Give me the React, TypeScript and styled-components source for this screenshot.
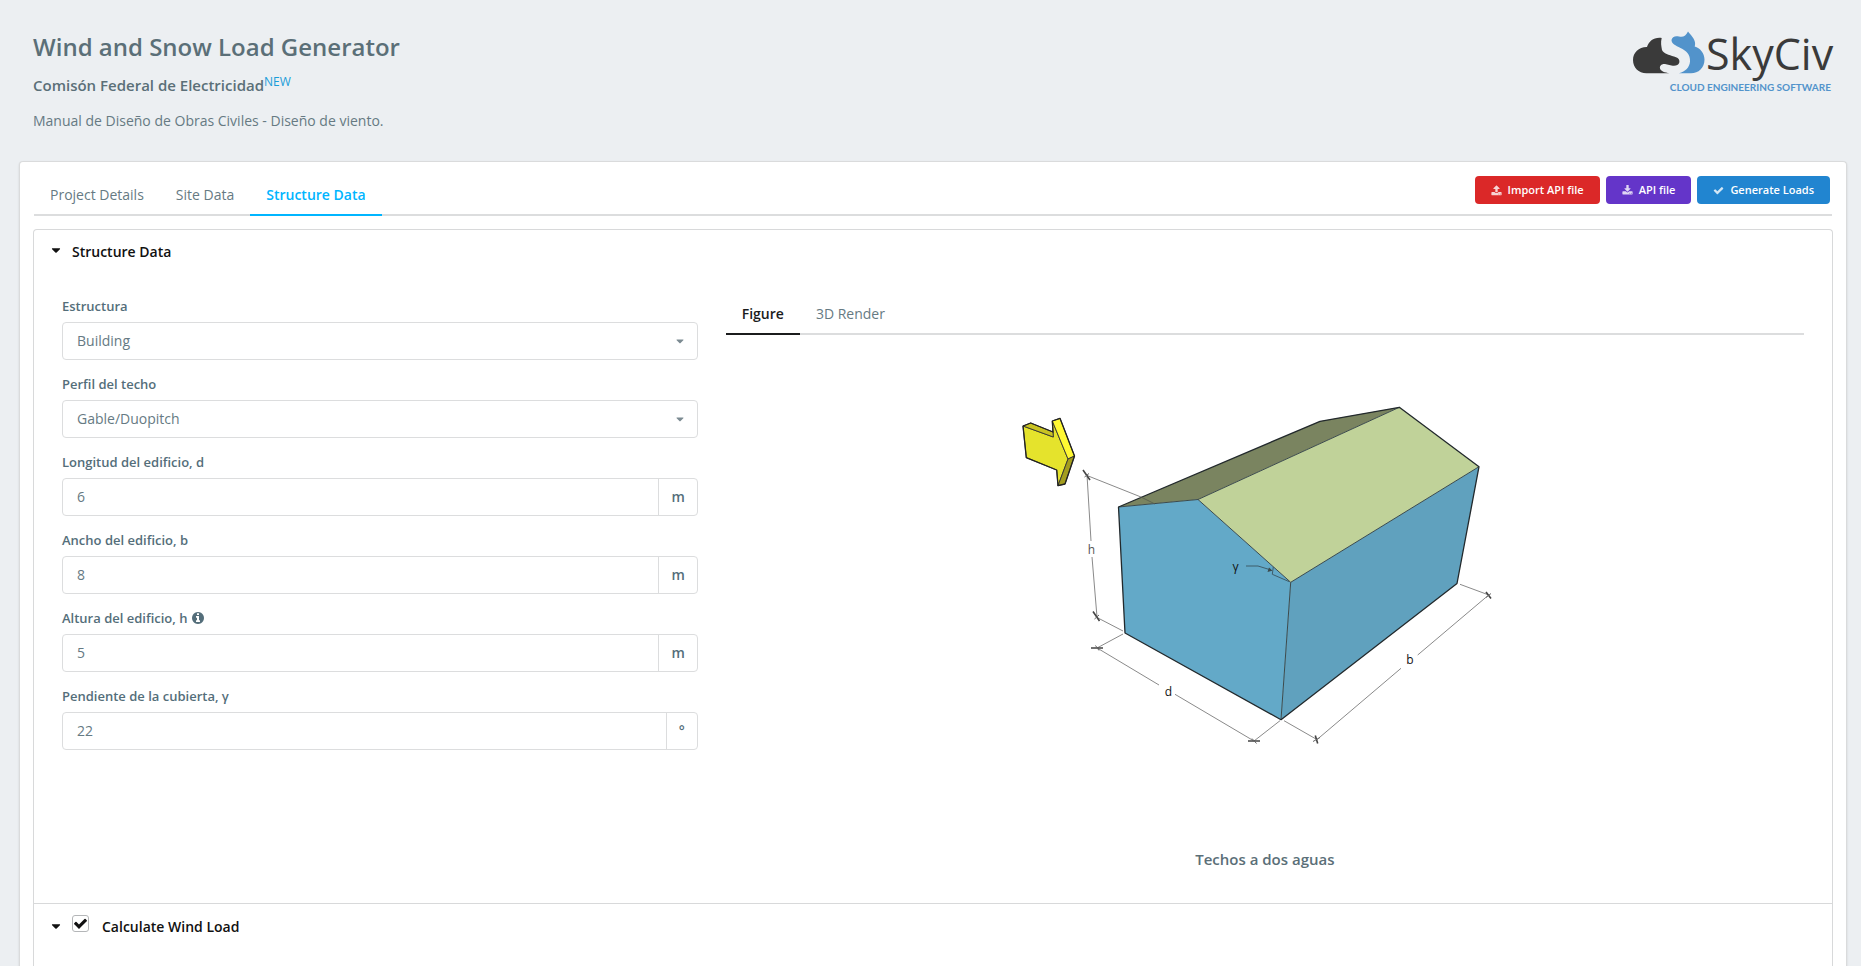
import React, { useState } from "react";
import styled, { createGlobalStyle } from "styled-components";
import { FaCaretDown } from "react-icons/fa";

const GlobalStyle = createGlobalStyle`
  *, *::before, *::after { box-sizing: border-box; }
  html, body { margin: 0; background: #eceff2; }
  body, button, input, select {
    font-family: "Open Sans", sans-serif;
    font-size: 14px;
    line-height: 20px;
    color: #546e7a;
  }
  h1, h2, p, figure { margin: 0; padding: 0; }
`;

const Page = styled.div`
  min-height: 100vh;
  overflow: hidden;
  display: flex;
  flex-direction: column;
`;

const Header = styled.header`
  display: flex;
  justify-content: space-between;
  align-items: flex-start;
  padding: 30px 24px 30px 33px;
`;

const HeaderText = styled.div`
  display: flex;
  flex-direction: column;
`;

const Title = styled.h1`
  font-size: 24px;
  line-height: 34px;
  font-weight: 600;
  color: #5b6f78;
`;

const Subtitle = styled.h2`
  display: flex;
  margin-top: 11px;
  font-size: 15px;
  line-height: 20px;
  font-weight: 600;
  color: #5b6f78;
`;

const NewTag = styled.span`
  margin-top: -3px;
  font-size: 12px;
  font-weight: 400;
  color: #1b9dd9;
`;

const Description = styled.p`
  margin-top: 16px;
  color: #667a83;
`;

const LogoSvg = styled.svg`
  display: block;
  flex: none;
`;

const Card = styled.main`
  flex: 1;
  margin: 0 14px 0 19px;
  padding: 14px 13px 0;
  background: #fff;
  border: 1px solid #dadbdc;
  border-bottom: 0;
  border-radius: 4px 4px 0 0;
  box-shadow: 0 1px 2px rgba(34, 36, 38, 0.15);
`;

const TopBar = styled.div`
  display: flex;
  justify-content: space-between;
  align-items: flex-start;
  margin: 0 1px;
  border-bottom: 2px solid #dcddde;
`;

const TabList = styled.div<{ $ruled?: boolean }>`
  display: flex;
  border-bottom: ${(p) => (p.$ruled ? "2px solid #dcddde" : "0")};
`;

const Tab = styled.button<{ $active: boolean; $accent: string }>`
  margin-bottom: -2px;
  padding: 9px 16px;
  border: 0;
  border-bottom: 2px solid ${(p) => (p.$active ? p.$accent : "transparent")};
  background: none;
  color: ${(p) => (p.$active ? p.$accent : "#667a83")};
  font-weight: ${(p) => (p.$active ? 600 : 400)};
  cursor: pointer;
`;

const Actions = styled.div`
  display: flex;
  gap: 6px;
  padding-right: 2px;
`;

const ActionButton = styled.button<{ $color: string }>`
  display: flex;
  align-items: center;
  gap: 6px;
  height: 28px;
  padding: 0 16px;
  border: 0;
  border-radius: 4px;
  background: ${(p) => p.$color};
  color: #fff;
  font-size: 11px;
  font-weight: 600;
  cursor: pointer;
  svg { opacity: 0.8; }
`;

const Accordion = styled.div`
  margin-top: 13px;
  min-height: 740px;
  border: 1px solid #d8d9da;
  border-radius: 4px 4px 0 0;
  border-bottom: 0;
`;

const Section = styled.section`
  & + & { border-top: 1px solid #d8d9da; }
`;

const SectionHeader = styled.div<{ $tall?: boolean }>`
  display: flex;
  align-items: center;
  gap: 9px;
  height: ${(p) => (p.$tall ? 46 : 43)}px;
  padding: 0 15px;
  color: #111;
  font-weight: 600;
`;

const SectionToggle = styled.button`
  display: flex;
  align-items: center;
  gap: 9px;
  padding: 0;
  border: 0;
  background: none;
  color: #111;
  font-weight: 600;
  cursor: pointer;
  svg { margin-bottom: 3px; }
`;

const CheckLabel = styled.label`
  display: flex;
  align-items: center;
  gap: 13px;
  cursor: pointer;
`;

const CheckWrap = styled.span`
  display: grid;
  width: 17px;
  height: 17px;
  place-items: center;
  margin-bottom: 7px;
  svg { grid-area: 1 / 1; pointer-events: none; }
`;

const CheckInput = styled.input`
  grid-area: 1 / 1;
  appearance: none;
  width: 17px;
  height: 17px;
  margin: 0;
  border: 1px solid #b4b6b8;
  border-radius: 3px;
  background: #fff;
`;

const Columns = styled.div`
  display: grid;
  grid-template-columns: minmax(0, 6fr) minmax(0, 10fr);
  padding: 22px 14px 34px;
`;

const Form = styled.form`
  display: flex;
  flex-direction: column;
  gap: 14px;
  padding: 1px 14px 0;
`;

const Field = styled.div`
  display: flex;
  flex-direction: column;
  gap: 6px;
`;

const Label = styled.label`
  display: flex;
  align-items: center;
  gap: 4px;
  font-size: 13px;
  font-weight: 600;
`;

const SelectWrap = styled.div`
  display: grid;
  align-items: center;
  svg {
    grid-area: 1 / 1;
    justify-self: end;
    margin-right: 12px;
    pointer-events: none;
    color: #7c8b92;
  }
`;

const Select = styled.select`
  grid-area: 1 / 1;
  appearance: none;
  width: 100%;
  height: 38px;
  padding: 0 14px;
  border: 1px solid #dcddde;
  border-radius: 4px;
  background: #fff;
  color: #667a83;
`;

const InputGroup = styled.div`
  display: flex;
  height: 38px;
  border: 1px solid #dcddde;
  border-radius: 4px;
`;

const Input = styled.input`
  flex: 1;
  min-width: 0;
  padding: 0 14px;
  border: 0;
  border-radius: 4px 0 0 4px;
  background: transparent;
  color: #667a83;
`;

const Unit = styled.span`
  display: flex;
  align-items: center;
  padding: 0 12px;
  border-left: 1px solid #dcddde;
  font-weight: 600;
`;

const Preview = styled.div`
  padding: 0 14px;
`;

const Figure = styled.figure`
  display: flex;
  flex-direction: column;
  align-items: center;
  padding-top: 55px;
`;

const Drawing = styled.svg`
  display: block;
  max-width: 100%;
`;

const Caption = styled.figcaption`
  margin-top: 89px;
  font-size: 15px;
  font-weight: 600;
  color: #5b6f78;
`;

const iconPaths = {
  check:
    "M1671 566q0 40-28 68l-724 724-136 136q-28 28-68 28t-68-28l-136-136-362-362q-28-28-28-68t28-68l136-136q28-28 68-28t68 28l294 295 656-657q28-28 68-28t68 28l136 136q28 28 28 68z",
  upload:
    "M1344 1472q0-26-19-45t-45-19-45 19-19 45 19 45 45 19 45-19 19-45zm256 0q0-26-19-45t-45-19-45 19-19 45 19 45 45 19 45-19 19-45zm128-224v320q0 40-28 68t-68 28h-1472q-40 0-68-28t-28-68v-320q0-40 28-68t68-28h427q21 56 70.500 92t110.500 36h256q61 0 110.500-36t70.500-92h427q40 0 68 28t28 68zm-325-648q-17 40-59 40h-256v448q0 26-19 45t-45 19h-256q-26 0-45-19t-19-45v-448h-256q-42 0-59-40-17-39 14-69l448-448q18-19 45-19t45 19l448 448q31 30 14 69z",
  download:
    "M1344 1344q0-26-19-45t-45-19-45 19-19 45 19 45 45 19 45-19 19-45zm256 0q0-26-19-45t-45-19-45 19-19 45 19 45 45 19 45-19 19-45zm128-224v320q0 40-28 68t-68 28h-1472q-40 0-68-28t-28-68v-320q0-40 28-68t68-28h465l135 136q58 56 136 56t136-56l136-136h464q40 0 68 28t28 68zm-325-569q17 41-14 70l-448 448q-18 19-45 19t-45-19l-448-448q-31-29-14-70 17-39 59-39h256v-448q0-26 19-45t45-19h256q26 0 45 19t19 45v448h256q42 0 59 39z",
  info:
    "M1152 1376v-160q0-14-9-23t-23-9h-96v-512q0-14-9-23t-23-9h-320q-14 0-23 9t-9 23v160q0 14 9 23t23 9h96v320h-96q-14 0-23 9t-9 23v160q0 14 9 23t23 9h448q14 0 23-9t9-23zm-128-896v-160q0-14-9-23t-23-9h-192q-14 0-23 9t-9 23v160q0 14 9 23t23 9h192q14 0 23-9t9-23zm640 416q0 209-103 385.500t-279.500 279.500-385.500 103-385.500-103-279.500-279.500-103-385.500 103-385.500 279.500-279.500 385.500-103 385.500 103 279.500 279.500 103 385.500z",
};

function Icon({ name, size }: { name: keyof typeof iconPaths; size: number }) {
  return (
    <svg width={size} height={size} viewBox="0 0 1792 1792" fill="currentColor" aria-hidden="true">
      <path d={iconPaths[name]} />
    </svg>
  );
}

function Logo() {
  return (
    <LogoSvg width="204" height="64" viewBox="0 0 204 64" role="img" aria-label="SkyCiv Cloud Engineering Software">
      <path
        fill="#3a3a3a"
        d="M13.500 43.300C5.500 43.300 0 37.500 0 30C0 22.500 6 16.800 14 17C16 11 21 7 28.700 8C27.500 12.500 28.300 16 29 20C30.500 23.500 36 25 41 26.500C45 27.500 47 29.500 46.300 32.500C45.500 35.500 42 36.300 38.500 35.500L33 34.200C28.500 33.300 26.500 36 27 38.500C27.700 41.500 32 42.300 36.500 43.300Z"
      />
      <path
        fill="#5293cb"
        d="M38.500 10C39 6.500 42.500 5.500 46 6.500C50 7.500 53 6 55 1.500C57.500 5 61.500 8 62 12.500C62.200 14 62 15.500 61.700 16.500C67 18 71.500 23 71.500 29.500C71.500 38 65.500 43.300 58 43.300L46 43.300C52.500 41.500 56.500 37.500 57 31.500C57.500 24.500 53 20.500 47.500 18C42.500 15.500 38.500 13.500 38.500 10Z"
      />
      <text x="73" y="40" fill="#3a3a3a" fontFamily="Open Sans, sans-serif" fontSize="43">SkyCiv</text>
      <text x="198" y="61" textAnchor="end" fill="#5293cb" fontFamily="Lato, sans-serif" fontSize="10" fontWeight="700">
        CLOUD ENGINEERING SOFTWARE
      </text>
    </LogoSvg>
  );
}

function BuildingDrawing() {
  return (
    <Drawing width="530" height="370" viewBox="0 0 530 370" role="img" aria-label="Gable roof building">
      <g strokeLinejoin="round" stroke="#333" strokeWidth="0.900">
        <path fill="#e5e32c" d="M23 36L53.300 47L52.300 31L68 69L58 95.700L56.700 80L26.300 67.700Z" />
        <path fill="#c9c322" d="M23 36L30.700 33L53 42L53.300 47Z" />
        <path fill="#fff833" d="M52.300 31L60 28.300L74.500 66L68 69Z" />
        <path fill="#a39d1e" d="M68 69L74.500 66L65 94L58 95.700Z" />
      </g>
      <path
        fill="none"
        stroke="#222"
        strokeWidth="1.300"
        strokeLinejoin="round"
        d="M23 36L30.700 33L53 42L52.300 31L60 28.300L74.500 66L65 94L58 95.700L56.700 80L26.300 67.700Z"
      />
      <path fill="#7a8460" d="M118.500 117L320 31.300L399.300 17.300L198 109.500Z" />
      <path fill="#c0d299" d="M198 109.500L399.300 17.300L479 76.700L290.700 192.300Z" />
      <path fill="#63a9c8" d="M118.500 117L198 109.500L290.700 192.300L281 329.700L125 243Z" />
      <path fill="#60a1be" d="M290.700 192.300L479 76.700L457 193.500L281 329.700Z" />
      <path
        fill="none"
        stroke="#3b4a4c"
        strokeWidth="1"
        d="M118.500 117L198 109.500L290.700 192.300L281 329.700M198 109.500L399.300 17.300M290.700 192.300L479 76.700"
      />
      <path
        fill="none"
        stroke="#22292c"
        strokeWidth="1.300"
        strokeLinejoin="round"
        d="M118.500 117L320 31.300L399.300 17.300L479 76.700L457 193.500L281 329.700L125 243Z"
      />
      <path
        fill="none"
        stroke="#8a8a8a"
        strokeWidth="1"
        d="M87 85L91 151M92 167L97 227M98 228L123 241M123 244L97 258M98 258.500L159 295M175 304.300L254 351M280 330.700L254 351M284 330.700L316 349M316.500 350L401 278.300M417.700 265L488.300 205.300M460 194.300L488 204.700M87 85.500L141 107"
      />
      <path fill="none" stroke="#555b4c" strokeWidth="0.800" d="M141 107L155 114" />
      <path
        fill="none"
        stroke="#444"
        strokeWidth="1.600"
        d="M83 80L90 90M93 221.500L99.500 231M91 258L103 258M248 351L260 351M315.300 345.500L317.700 353.500M486 202L491 208.500"
      />
      <path
        fill="none"
        stroke="#666"
        strokeWidth="1"
        d="M84.500 87L89 83.500M94.500 229L99 225M95.500 255.500L99 260.500M252 348.500L256.500 353.500M313 351.500L320 347.500M486 207.500L491 203.500"
      />
      <path fill="none" stroke="#3b5560" strokeWidth="0.900" d="M246 176L258 176L271 180M273.300 177L272.300 184.300L289.300 191.700" />
      <path fill="#3b4a4c" d="M272.500 180.700L267.500 182L269 177.500Z" />
      <g fontFamily="Open Sans, sans-serif" fontSize="12" textAnchor="middle" fill="#111">
        <text x="91.500" y="164" fill="#555">h</text>
        <text x="168.500" y="306">d</text>
        <text x="410" y="274">b</text>
        <text x="235.500" y="181">γ</text>
      </g>
    </Drawing>
  );
}

const mainTabs = ["Project Details", "Site Data", "Structure Data"];
const previewTabs = ["Figure", "3D Render"];

const selects = [
  { id: "structure", label: "Estructura", options: ["Building"] },
  { id: "roof", label: "Perfil del techo", options: ["Gable/Duopitch"] },
];

const inputs = [
  { id: "length", label: "Longitud del edificio, d", value: "6", unit: "m" },
  { id: "width", label: "Ancho del edificio, b", value: "8", unit: "m" },
  { id: "height", label: "Altura del edificio, h", value: "5", unit: "m", info: true },
  { id: "pitch", label: "Pendiente de la cubierta, γ", value: "22", unit: "°" },
];

export default function App() {
  const [tab, setTab] = useState("Structure Data");
  const [preview, setPreview] = useState("Figure");

  return (
    <>
      <GlobalStyle />
      <Page>
        <Header>
          <HeaderText>
            <Title>Wind and Snow Load Generator</Title>
            <Subtitle>
              Comisón Federal de Electricidad<NewTag>NEW</NewTag>
            </Subtitle>
            <Description>Manual de Diseño de Obras Civiles - Diseño de viento.</Description>
          </HeaderText>
          <Logo />
        </Header>
        <Card>
          <TopBar>
            <TabList role="tablist">
              {mainTabs.map((name) => (
                <Tab key={name} role="tab" aria-selected={tab === name} $active={tab === name} $accent="#00b5ff" onClick={() => setTab(name)}>
                  {name}
                </Tab>
              ))}
            </TabList>
            <Actions>
              <ActionButton $color="#db2828"><Icon name="upload" size={11} />Import API file</ActionButton>
              <ActionButton $color="#6435c9"><Icon name="download" size={11} />API file</ActionButton>
              <ActionButton $color="#2185d0"><Icon name="check" size={11} />Generate Loads</ActionButton>
            </Actions>
          </TopBar>
          <Accordion>
            <Section>
              <SectionHeader>
                <SectionToggle aria-expanded="true">
                  <FaCaretDown size={14} />
                  Structure Data
                </SectionToggle>
              </SectionHeader>
              <Columns>
                <Form>
                  {selects.map((s) => (
                    <Field key={s.id}>
                      <Label htmlFor={s.id}>{s.label}</Label>
                      <SelectWrap>
                        <Select id={s.id}>
                          {s.options.map((o) => <option key={o}>{o}</option>)}
                        </Select>
                        <FaCaretDown size={12} />
                      </SelectWrap>
                    </Field>
                  ))}
                  {inputs.map((f) => (
                    <Field key={f.id}>
                      <Label htmlFor={f.id}>
                        {f.label}
                        {f.info && <Icon name="info" size={14} />}
                      </Label>
                      <InputGroup>
                        <Input id={f.id} defaultValue={f.value} />
                        <Unit>{f.unit}</Unit>
                      </InputGroup>
                    </Field>
                  ))}
                </Form>
                <Preview>
                  <TabList role="tablist" $ruled>
                    {previewTabs.map((name) => (
                      <Tab key={name} role="tab" aria-selected={preview === name} $active={preview === name} $accent="#1b1c1d" onClick={() => setPreview(name)}>
                        {name}
                      </Tab>
                    ))}
                  </TabList>
                  <Figure>
                    <BuildingDrawing />
                    <Caption>Techos a dos aguas</Caption>
                  </Figure>
                </Preview>
              </Columns>
            </Section>
            <Section>
              <SectionHeader $tall>
                <SectionToggle aria-expanded="true" aria-label="Toggle wind load">
                  <FaCaretDown size={14} />
                </SectionToggle>
                <CheckLabel>
                  <CheckWrap>
                    <CheckInput type="checkbox" defaultChecked />
                    <Icon name="check" size={15} />
                  </CheckWrap>
                  Calculate Wind Load
                </CheckLabel>
              </SectionHeader>
            </Section>
          </Accordion>
        </Card>
      </Page>
    </>
  );
}
